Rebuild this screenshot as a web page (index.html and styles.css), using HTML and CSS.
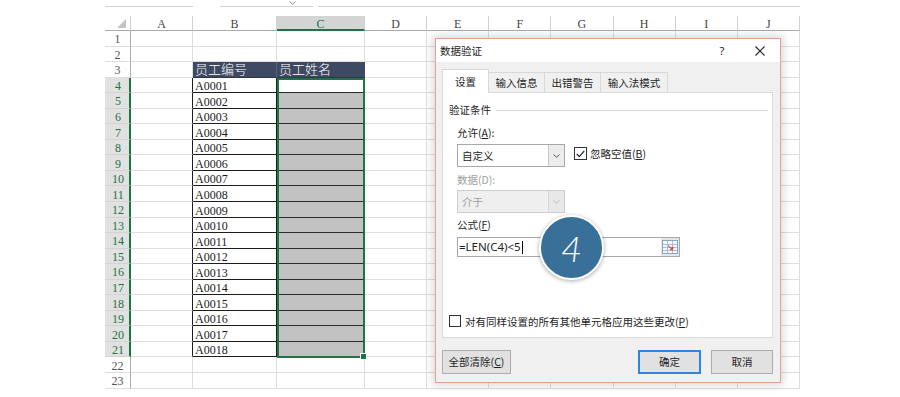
FILE: index.html
```html
<!DOCTYPE html>
<html lang="zh-CN">
<head>
<meta charset="utf-8">
<title>数据验证</title>
<link rel="stylesheet" href="styles.css">
</head>
<body>
<div class="topbar">
  <div class="tb tb1"></div>
  <div class="tb tb2"><svg class="chev" width="7" height="4" viewBox="0 0 7 4"><path d="M0.5 0.5 L3.5 3.2 L6.5 0.5" fill="none" stroke="#8a8a8a" stroke-width="1"/></svg></div>
  <div class="tb tb3"></div>
</div>

<div class="sheet">
  <div class="row hdr">
    <div class="corner"><svg width="9" height="9" viewBox="0 0 9 9"><polygon points="9,0 9,9 0,9" fill="#c4c4c4"/></svg></div>
    <div class="ch">A</div><div class="ch">B</div><div class="ch csel">C</div><div class="ch">D</div><div class="ch">E</div><div class="ch">F</div><div class="ch">G</div><div class="ch">H</div><div class="ch">I</div><div class="ch">J</div>
  </div>
  <div class="row"><div class="rh">1</div><div class="c"></div><div class="c"></div><div class="c"></div><div class="c"></div><div class="c"></div><div class="c"></div><div class="c"></div><div class="c"></div><div class="c"></div><div class="c"></div></div>
  <div class="row"><div class="rh">2</div><div class="c"></div><div class="c"></div><div class="c"></div><div class="c"></div><div class="c"></div><div class="c"></div><div class="c"></div><div class="c"></div><div class="c"></div><div class="c"></div></div>
  <div class="row"><div class="rh">3</div><div class="c"></div><div class="c nv nvb">员工编号</div><div class="c nv">员工姓名</div><div class="c"></div><div class="c"></div><div class="c"></div><div class="c"></div><div class="c"></div><div class="c"></div><div class="c"></div></div>
  <div class="row"><div class="rh rsel">4</div><div class="c ab"></div><div class="c bx">A0001</div><div class="cc cw"></div><div class="c"></div><div class="c"></div><div class="c"></div><div class="c"></div><div class="c"></div><div class="c"></div><div class="c"></div></div>
  <div class="row"><div class="rh rsel">5</div><div class="c ab"></div><div class="c bx">A0002</div><div class="cc cg"></div><div class="c"></div><div class="c"></div><div class="c"></div><div class="c"></div><div class="c"></div><div class="c"></div><div class="c"></div></div>
  <div class="row"><div class="rh rsel">6</div><div class="c ab"></div><div class="c bx">A0003</div><div class="cc cg"></div><div class="c"></div><div class="c"></div><div class="c"></div><div class="c"></div><div class="c"></div><div class="c"></div><div class="c"></div></div>
  <div class="row"><div class="rh rsel">7</div><div class="c ab"></div><div class="c bx">A0004</div><div class="cc cg"></div><div class="c"></div><div class="c"></div><div class="c"></div><div class="c"></div><div class="c"></div><div class="c"></div><div class="c"></div></div>
  <div class="row"><div class="rh rsel">8</div><div class="c ab"></div><div class="c bx">A0005</div><div class="cc cg"></div><div class="c"></div><div class="c"></div><div class="c"></div><div class="c"></div><div class="c"></div><div class="c"></div><div class="c"></div></div>
  <div class="row"><div class="rh rsel">9</div><div class="c ab"></div><div class="c bx">A0006</div><div class="cc cg"></div><div class="c"></div><div class="c"></div><div class="c"></div><div class="c"></div><div class="c"></div><div class="c"></div><div class="c"></div></div>
  <div class="row"><div class="rh rsel">10</div><div class="c ab"></div><div class="c bx">A0007</div><div class="cc cg"></div><div class="c"></div><div class="c"></div><div class="c"></div><div class="c"></div><div class="c"></div><div class="c"></div><div class="c"></div></div>
  <div class="row"><div class="rh rsel">11</div><div class="c ab"></div><div class="c bx">A0008</div><div class="cc cg"></div><div class="c"></div><div class="c"></div><div class="c"></div><div class="c"></div><div class="c"></div><div class="c"></div><div class="c"></div></div>
  <div class="row"><div class="rh rsel">12</div><div class="c ab"></div><div class="c bx">A0009</div><div class="cc cg"></div><div class="c"></div><div class="c"></div><div class="c"></div><div class="c"></div><div class="c"></div><div class="c"></div><div class="c"></div></div>
  <div class="row"><div class="rh rsel">13</div><div class="c ab"></div><div class="c bx">A0010</div><div class="cc cg"></div><div class="c"></div><div class="c"></div><div class="c"></div><div class="c"></div><div class="c"></div><div class="c"></div><div class="c"></div></div>
  <div class="row"><div class="rh rsel">14</div><div class="c ab"></div><div class="c bx">A0011</div><div class="cc cg"></div><div class="c"></div><div class="c"></div><div class="c"></div><div class="c"></div><div class="c"></div><div class="c"></div><div class="c"></div></div>
  <div class="row"><div class="rh rsel">15</div><div class="c ab"></div><div class="c bx">A0012</div><div class="cc cg"></div><div class="c"></div><div class="c"></div><div class="c"></div><div class="c"></div><div class="c"></div><div class="c"></div><div class="c"></div></div>
  <div class="row"><div class="rh rsel">16</div><div class="c ab"></div><div class="c bx">A0013</div><div class="cc cg"></div><div class="c"></div><div class="c"></div><div class="c"></div><div class="c"></div><div class="c"></div><div class="c"></div><div class="c"></div></div>
  <div class="row"><div class="rh rsel">17</div><div class="c ab"></div><div class="c bx">A0014</div><div class="cc cg"></div><div class="c"></div><div class="c"></div><div class="c"></div><div class="c"></div><div class="c"></div><div class="c"></div><div class="c"></div></div>
  <div class="row"><div class="rh rsel">18</div><div class="c ab"></div><div class="c bx">A0015</div><div class="cc cg"></div><div class="c"></div><div class="c"></div><div class="c"></div><div class="c"></div><div class="c"></div><div class="c"></div><div class="c"></div></div>
  <div class="row"><div class="rh rsel">19</div><div class="c ab"></div><div class="c bx">A0016</div><div class="cc cg"></div><div class="c"></div><div class="c"></div><div class="c"></div><div class="c"></div><div class="c"></div><div class="c"></div><div class="c"></div></div>
  <div class="row"><div class="rh rsel">20</div><div class="c ab"></div><div class="c bx">A0017</div><div class="cc cg"></div><div class="c"></div><div class="c"></div><div class="c"></div><div class="c"></div><div class="c"></div><div class="c"></div><div class="c"></div></div>
  <div class="row"><div class="rh rsel">21</div><div class="c ab"></div><div class="c bx">A0018</div><div class="cc cg"></div><div class="c"></div><div class="c"></div><div class="c"></div><div class="c"></div><div class="c"></div><div class="c"></div><div class="c"></div></div>
  <div class="row"><div class="rh">22</div><div class="c"></div><div class="c"></div><div class="c"></div><div class="c"></div><div class="c"></div><div class="c"></div><div class="c"></div><div class="c"></div><div class="c"></div><div class="c"></div></div>
  <div class="row"><div class="rh">23</div><div class="c"></div><div class="c"></div><div class="c"></div><div class="c"></div><div class="c"></div><div class="c"></div><div class="c"></div><div class="c"></div><div class="c"></div><div class="c"></div></div>

  <div class="selbox"><span class="handle"></span></div>
</div>

<div class="dlg">
  <div class="dlg-title">
    <span class="dlg-name">数据验证</span>
    <span class="dlg-q">?</span>
    <span class="dlg-x"><svg width="10" height="10" viewBox="0 0 10 10"><path d="M0.5 0.5 L9.5 9.5 M9.5 0.5 L0.5 9.5" stroke="#222" stroke-width="1.1"/></svg></span>
  </div>
  <div class="dlg-body">
    <div class="tabs">
      <div class="tab on">设置</div>
      <div class="tab t2">输入信息</div>
      <div class="tab t3">出错警告</div>
      <div class="tab t4">输入法模式</div>
    </div>
    <div class="panel">
      <div class="grp"><span>验证条件</span><span class="grp-line"></span></div>
      <div class="fields">
        <div class="lbl first">允许(<u>A</u>):</div>
        <div class="selrow">
          <div class="combo"><span class="combo-txt">自定义</span><span class="combo-btn"><svg width="7" height="4" viewBox="0 0 7 4"><path d="M0.5 0.5 L3.5 3.3 L6.5 0.5" fill="none" stroke="#555" stroke-width="1"/></svg></span></div>
          <div class="chk chk-on"><svg width="9" height="8" viewBox="0 0 9 8"><path d="M0.8 4 L3.3 6.6 L8.3 0.8" fill="none" stroke="#222" stroke-width="1.2"/></svg></div>
          <span class="chk-lbl">忽略空值(<u>B</u>)</span>
        </div>
        <div class="lbl dis">数据(D):</div>
        <div class="combo combo-dis"><span class="combo-txt">介于</span><span class="combo-btn"><svg width="7" height="4" viewBox="0 0 7 4"><path d="M0.5 0.5 L3.5 3.3 L6.5 0.5" fill="none" stroke="#bdbdbd" stroke-width="1"/></svg></span></div>
        <div class="lbl lbl-fx">公式(<u>F</u>)</div>
        <div class="fx">
          <span class="fx-txt">=LEN(C4)&lt;5<span class="caret"></span></span>
          <span class="fx-btn"><svg width="16" height="14" viewBox="0 0 16 14">
            <rect x="0.5" y="0.5" width="15" height="13" fill="#f4f8fc" stroke="#8aa4c4"/>
            <path d="M1 4.5 H15 M1 7.5 H15 M1 10.5 H15 M5.5 1 V13 M10.5 1 V13" stroke="#a9bfd9" stroke-width="1"/>
            <path d="M6 5 L9 7.5 L11.5 6.5 L11 10.5 L7.5 10 L9 8.8 L6 6.3 Z" fill="#e0453a"/>
          </svg></span>
        </div>
      </div>
      <div class="allrow">
        <div class="chk chk-sm"></div>
        <span class="chk-lbl">对有同样设置的所有其他单元格应用这些更改(<u>P</u>)</span>
      </div>
    </div>
    <div class="btns">
      <div class="btn b-clear">全部清除(<u>C</u>)</div>
      <span class="btn-sp"></span>
      <div class="btn b-ok">确定</div>
      <div class="btn b-cancel">取消</div>
    </div>
  </div>
</div>

<div class="badge">4</div>
</body>
</html>
```

FILE: styles.css
```css
html, body {
  margin: 0;
  padding: 0;
}
body {
  width: 900px;
  height: 397px;
  overflow: hidden;
  position: relative;
  background: #ffffff;
  font-family: "Liberation Serif", serif;
}

/* remnants of the formula bar */
.topbar {
  display: flex;
  width: 800px;
  height: 16px;
  padding-left: 105px;
  box-sizing: border-box;
}
.tb {
  height: 6px;
  border-bottom: 1px solid #d2d2d2;
}
.tb1 { width: 88px; }
.tb2 {
  width: 93px;
  margin-left: 27px;
  display: flex;
  justify-content: flex-end;
  align-items: flex-start;
}
.chev { margin-right: 17px; margin-top: 1px; }
.tb3 { flex: 1; margin-left: 5px; }

/* the sheet */
.sheet {
  position: relative;
  margin-left: 105px;
  width: 695px;
}
.row {
  display: grid;
  grid-template-columns: 26px 62px 84px 88px 62px repeat(6, 1fr);
  grid-template-rows: 100%;
  height: 15.55px;
  line-height: 12px;
}
.row.hdr { height: 15px; }
.row > div { min-height: 0; overflow: hidden; }
.row > .nv { overflow: visible; }

.c {
  box-sizing: border-box;
  border-right: 1px solid #dedede;
  border-bottom: 1px solid #dedede;
}
.corner {
  box-sizing: border-box;
  border-right: 1px solid #d0d0d0;
  border-bottom: 1px solid #ababab;
  display: flex;
  justify-content: flex-end;
  align-items: flex-end;
  padding: 0 4px 2px 0;
}
.ch {
  box-sizing: border-box;
  border-right: 1px solid #d0d0d0;
  border-bottom: 1px solid #ababab;
  text-align: center;
  font-size: 12px;
  line-height: 12px;
  padding-top: 2px;
  color: #444;
}
.ch.csel {
  background: #d4d4d4;
  border-bottom: 2px solid #217346;
  color: #1f6b40;
}
.rh {
  box-sizing: border-box;
  border-right: 1px solid #ababab;
  border-bottom: 1px solid #dedede;
  display: flex;
  justify-content: center;
  align-items: center;
  padding-top: 2px;
  font-size: 12px;
  line-height: 12px;
  color: #555;
}
.rh.rsel {
  background: #e1e1e1;
  color: #217346;
  border-right: 2px solid #217346;
  border-bottom-color: #d2d2d2;
  padding-left: 2px;
}

.nv {
  background: #3e4a62;
  border-right-color: #3e4a62;
  border-bottom-color: #2e3648;
  color: #ffffff;
  font-family: "Noto Sans CJK SC", sans-serif;
  font-weight: 300;
  font-size: 13px;
  line-height: 14px;
  padding-left: 2px;
  white-space: nowrap;
}
.nvb { border-right-color: #56617a; }

.ab { border-right-color: #1e1e1e; }
.bx {
  border-right-color: #1e1e1e;
  border-bottom-color: #1e1e1e;
  display: flex;
  align-items: flex-end;
  padding-left: 2px;
  font-size: 12px;
  line-height: 12px;
  color: #1a1a1a;
}

/* C4:C21 cells */
.cc {
  box-sizing: border-box;
  border-bottom: 1px solid #2a2a2a;
  border-right: 1px solid #dedede;
}
.cw { background: #ffffff; }
.cg { background: #c2c2c2; }

.selbox {
  position: absolute;
  z-index: 2;
  left: 172px;
  top: 61.65px;
  width: 88px;
  height: 280px;
  box-sizing: border-box;
  border: 2px solid #217346;
}
.handle {
  position: absolute;
  right: -4px;
  bottom: -4px;
  width: 5px;
  height: 5px;
  background: #217346;
  border: 1px solid #ffffff;
}

/* dialog */
.dlg {
  position: absolute;
  z-index: 3;
  left: 435px;
  top: 38px;
  width: 346px;
  height: 345px;
  box-sizing: border-box;
  border: 1px solid #dfa58b;
  background: #f0f0f0;
  box-shadow: 0 0 9px 2px rgba(0, 0, 0, 0.16);
  font-family: "Noto Sans CJK SC", "Noto Sans", sans-serif;
  font-size: 10.5px;
  line-height: 14px;
  color: #1e1e1e;
}
.dlg u { text-decoration: underline; text-underline-offset: 1px; }
.dlg-title {
  height: 23px;
  background: #ffffff;
  display: flex;
  align-items: center;
  padding-left: 4px;
}
.dlg-name { flex: 1; }
.dlg-q {
  width: 14px;
  text-align: center;
  margin-right: 16px;
  font-family: "Noto Sans", sans-serif;
  font-size: 11px;
}
.dlg-x {
  width: 30px;
  margin-right: 5px;
  display: flex;
  justify-content: center;
  align-items: center;
}
.dlg-body {
  padding: 0 7px 0 6px;
}
.tabs {
  display: flex;
  align-items: flex-end;
  height: 23px;
  margin-top: 7px;
}
.tab {
  box-sizing: border-box;
  height: 20px;
  border: 1px solid #d9d9d9;
  border-bottom: none;
  margin-left: -1px;
  text-align: center;
  padding-top: 3px;
  background: #f0f0f0;
}
.tab.on {
  position: relative;
  z-index: 1;
  height: 24px;
  margin-bottom: -1px;
  margin-left: 0;
  width: 47px;
  padding-top: 5px;
  background: #ffffff;
}
.t2 { width: 57px; }
.t3 { width: 57px; }
.t4 { width: 68px; }

.panel {
  box-sizing: border-box;
  height: 246px;
  background: #ffffff;
  border: 1px solid #d9d9d9;
  padding: 10px 4px 0 6px;
}
.grp {
  display: flex;
  align-items: center;
  height: 14px;
}
.grp-line {
  flex: 1;
  height: 1px;
  background: #dcdcdc;
  margin-left: 5px;
}
.fields { margin-left: 8px; }
.lbl { height: 14px; }
.lbl.first { margin-top: 9px; }
.lbl.dis { margin-top: 6px; color: #a0a0a0; }
.lbl.lbl-fx { margin-top: 5px; }

.selrow {
  display: flex;
  align-items: flex-start;
  margin-top: 4px;
  height: 23px;
}
.combo {
  box-sizing: border-box;
  width: 108px;
  height: 23px;
  border: 1px solid #a8a8a8;
  background: #ffffff;
  display: flex;
}
.combo-txt {
  flex: 1;
  padding-left: 4px;
  line-height: 21px;
}
.combo-btn {
  width: 15px;
  border-left: 1px solid #c6c6c6;
  background: #ececec;
  display: flex;
  justify-content: center;
  align-items: center;
}
.combo-dis {
  margin-top: 3px;
  background: #efefef;
  border-color: #cccccc;
  color: #9d9d9d;
}
.combo-dis .combo-btn {
  background: #e8e8e8;
  border-left-color: #d6d6d6;
}

.chk {
  box-sizing: border-box;
  width: 13px;
  height: 13px;
  border: 1px solid #333333;
  background: #ffffff;
  display: flex;
  justify-content: center;
  align-items: center;
}
.chk-on {
  margin-left: 9px;
  margin-top: 3px;
}
.chk-lbl {
  margin-left: 3px;
  line-height: 17px;
}
.selrow .chk-lbl { margin-top: 1px; }

.fx {
  box-sizing: border-box;
  margin-top: 5px;
  width: 223px;
  height: 20px;
  border: 1px solid #a8a8a8;
  background: #ffffff;
  display: flex;
}
.fx-txt {
  flex: 1;
  padding-left: 1px;
  font-family: "Noto Sans", sans-serif;
  font-size: 11.5px;
  line-height: 18px;
  display: flex;
  align-items: center;
}
.caret {
  display: inline-block;
  width: 1px;
  height: 13px;
  background: #000;
  margin-left: 1px;
}
.fx-btn {
  width: 18px;
  background: #e6e6e6;
  display: flex;
  justify-content: center;
  align-items: center;
}

.allrow {
  display: flex;
  align-items: center;
  margin-top: 57px;
  height: 14px;
}
.chk-sm {
  width: 12px;
  height: 12px;
}
.allrow .chk-lbl { margin-left: 4px; }

.btns {
  display: flex;
  margin-top: 12px;
  height: 24px;
}
.btn {
  box-sizing: border-box;
  height: 24px;
  border: 1px solid #adadad;
  background: #e1e1e1;
  text-align: center;
  line-height: 22px;
}
.b-clear { width: 69px; }
.btn-sp { flex: 1; }
.b-ok {
  width: 63px;
  border: 2px solid #2f86dc;
  line-height: 20px;
}
.b-cancel {
  width: 62px;
  margin-left: 10px;
}

/* step badge */
.badge {
  position: absolute;
  z-index: 4;
  left: 539px;
  top: 215px;
  width: 65px;
  height: 65px;
  box-sizing: border-box;
  border-radius: 50%;
  border: 2px solid #ffffff;
  background: #39709a;
  box-shadow: 0 1px 4px rgba(0, 0, 0, 0.35);
  color: #ffffff;
  display: flex;
  justify-content: center;
  align-items: center;
  font-family: Lato, "Open Sans", sans-serif;
  font-weight: 300;
  font-style: italic;
  font-size: 36px;
  line-height: 1;
}
```
